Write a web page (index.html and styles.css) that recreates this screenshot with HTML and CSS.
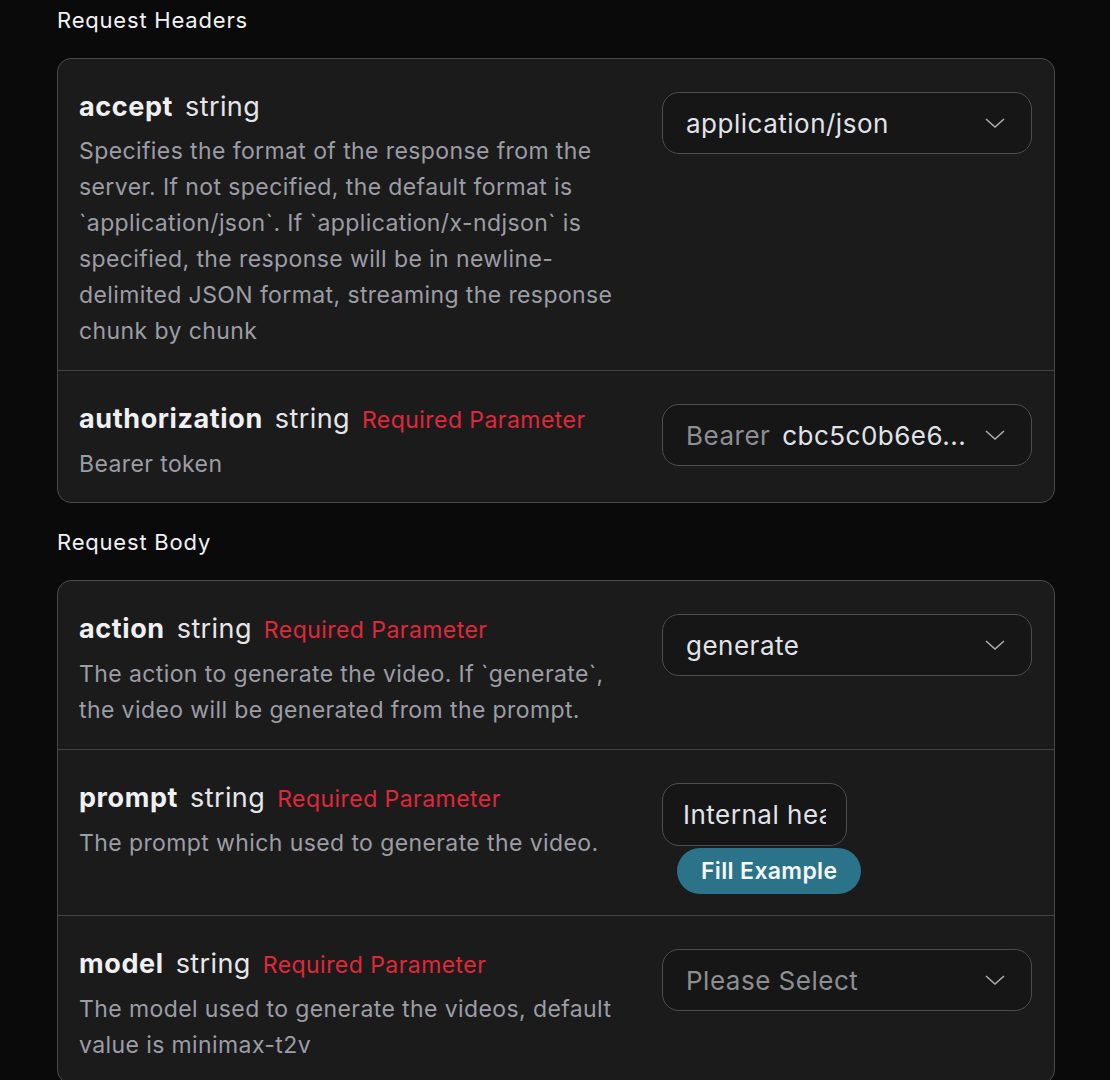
FILE: index.html
```html
<!DOCTYPE html>
<html lang="en">
  <head>
    <meta charset="utf-8" />
    <title>Request Parameters</title>
    <link rel="stylesheet" href="styles.css">
  </head>
  <body>
    <div class="page">
      <div class="section-label">Request Headers</div>
      <div class="card">
        <div class="row">
          <div class="info">
            <div class="title">
              <span class="name">accept</span>
              <span class="type">string</span>
            </div>
            <div class="desc">
              Specifies the format of the response from the server. If not specified, the default format is `application/json`. If `application/x-ndjson` is specified, the response will be in newline-delimited JSON format, streaming the response chunk by chunk
            </div>
          </div>
          <div class="control">
            <div class="select">
              <span class="value">application/json</span>
              <svg class="chevron" viewBox="0 0 20 10"><path d="M1 1 L10 9 L19 1" /></svg>
            </div>
          </div>
        </div>
        <div class="row">
          <div class="info">
            <div class="title">
              <span class="name">authorization</span>
              <span class="type">string</span>
              <span class="required">Required Parameter</span>
            </div>
            <div class="desc">Bearer token</div>
          </div>
          <div class="control">
            <div class="select">
              <span class="value"><span class="prefix">Bearer</span> cbc5c0b6e6...</span>
              <svg class="chevron" viewBox="0 0 20 10"><path d="M1 1 L10 9 L19 1" /></svg>
            </div>
          </div>
        </div>
      </div>

      <div class="section-label body-label">Request Body</div>
      <div class="card">
        <div class="row">
          <div class="info">
            <div class="title">
              <span class="name">action</span>
              <span class="type">string</span>
              <span class="required">Required Parameter</span>
            </div>
            <div class="desc">The action to generate the video. If `generate`, the video will be generated from the prompt.</div>
          </div>
          <div class="control">
            <div class="select">
              <span class="value">generate</span>
              <svg class="chevron" viewBox="0 0 20 10"><path d="M1 1 L10 9 L19 1" /></svg>
            </div>
          </div>
        </div>
        <div class="row">
          <div class="info">
            <div class="title">
              <span class="name">prompt</span>
              <span class="type">string</span>
              <span class="required">Required Parameter</span>
            </div>
            <div class="desc">The prompt which used to generate the video.</div>
          </div>
          <div class="control">
            <input class="text-input" type="text" value="Internal heart of a volcano" />
            <button class="fill-btn">Fill Example</button>
          </div>
        </div>
        <div class="row">
          <div class="info">
            <div class="title">
              <span class="name">model</span>
              <span class="type">string</span>
              <span class="required">Required Parameter</span>
            </div>
            <div class="desc">The model used to generate the videos, default value is minimax-t2v</div>
          </div>
          <div class="control">
            <div class="select">
              <span class="value placeholder">Please Select</span>
              <svg class="chevron" viewBox="0 0 20 10"><path d="M1 1 L10 9 L19 1" /></svg>
            </div>
          </div>
        </div>
      </div>
    </div>
  </body>
</html>
```

FILE: styles.css
```css
body {
  margin: 0;
  background-color: #0a0a0a;
  color: #ececef;
  font-family: Inter, "Noto Sans", sans-serif;
}

.page {
  width: 998px;
  margin-left: 57px;
  padding-top: 6px;
}

.section-label {
  font-size: 22px;
  letter-spacing: 0.8px;
  line-height: 28px;
  color: #f2f2f2;
  margin-bottom: 24px;
}

.body-label {
  margin-top: 25px;
  margin-bottom: 24px;
}

.card {
  background-color: #1b1b1c;
  border: 1px solid #4a4a4c;
  border-radius: 14px;
  overflow: hidden;
}

.row {
  display: flex;
  align-items: flex-start;
  gap: 32px;
  padding: 33px 22px 21px 21px;
  border-bottom: 1px solid #444446;
}

.row:last-child {
  border-bottom: none;
  padding-bottom: 20px;
}

.info {
  flex: 1;
}

.title {
  display: flex;
  align-items: baseline;
  gap: 12px;
  line-height: 30px;
}

.name {
  font-size: 27px;
  font-weight: 700;
  letter-spacing: 0.6px;
  color: #f0f0f2;
}

.type {
  font-size: 27px;
  letter-spacing: 0.4px;
  color: #e6e6ea;
}

.required {
  font-size: 23px;
  letter-spacing: 0.45px;
  color: #e0283a;
}

.desc {
  margin-top: 11px;
  font-size: 23px;
  letter-spacing: 0.4px;
  line-height: 36px;
  color: #9c9da5;
}

.control {
  width: 370px;
  flex-shrink: 0;
  display: flex;
  flex-direction: column;
  align-items: flex-start;
}

.select {
  box-sizing: border-box;
  width: 370px;
  height: 62px;
  border: 1px solid #4e4e50;
  border-radius: 17px;
  background-color: #161617;
  display: flex;
  align-items: center;
  padding: 0 26px 0 23px;
}

.value {
  flex: 1;
  font-size: 26px;
  letter-spacing: 0.5px;
  color: #e1e3e9;
  white-space: nowrap;
  overflow: hidden;
}

.prefix {
  color: #8e8e94;
  margin-right: 4px;
}

.placeholder {
  color: #8e8e94;
}

.chevron {
  width: 20px;
  height: 10px;
  fill: none;
  stroke: #a9a9ae;
  stroke-width: 1.6;
}

.text-input {
  box-sizing: border-box;
  width: 185px;
  height: 63px;
  border: 1px solid #4e4e50;
  border-radius: 17px;
  background-color: #161617;
  padding: 0 20px;
  font-family: Inter, "Noto Sans", sans-serif;
  font-size: 26px;
  letter-spacing: 0.5px;
  color: #e1e3e9;
  outline: none;
}

.fill-btn {
  margin-top: 2px;
  margin-left: 15px;
  height: 46px;
  padding: 0 24px;
  border: none;
  border-radius: 23px;
  background-color: #2a7388;
  color: #f6f8fa;
  font-family: Inter, "Noto Sans", sans-serif;
  font-size: 23px;
  font-weight: 600;
  letter-spacing: 0.35px;
}
```
